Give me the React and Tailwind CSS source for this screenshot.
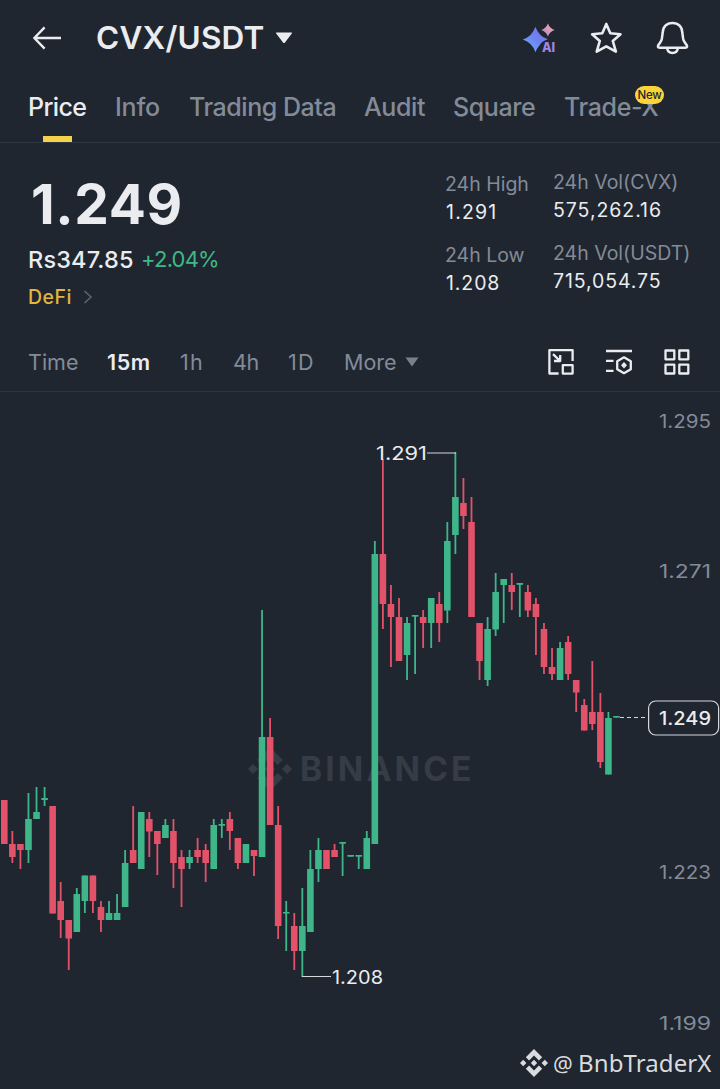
const TABS = [
  { label: 'Price', box: 'w-[87px] tracking-[-0.6px]', active: true },
  { label: 'Info', box: 'w-[74px] tracking-[-0.2px]' },
  { label: 'Trading Data', box: 'w-[175px] tracking-[-0.45px]' },
  { label: 'Audit', box: 'w-[89px] tracking-[-0.4px]' },
  { label: 'Square', box: 'w-[111px] tracking-[-0.4px]' },
  { label: 'Trade-X', box: 'w-[94px] tracking-[-0.35px]', badge: 'New' },
];

const FRAMES = [
  { label: 'Time', box: 'w-[79px] tracking-[0px]' },
  { label: '15m', box: 'w-[73px] tracking-[0.6px] font-semibold text-[#eaecef]' },
  { label: '1h', box: 'w-[53px] tracking-[1.2px]' },
  { label: '4h', box: 'w-[55px] tracking-[-0.4px]' },
  { label: '1D', box: 'w-[56px] tracking-[1.2px]' },
];

// [direction, high, body top, body bottom, low] in chart pixels
const CANDLES = [
  ['r', 800, 800, 844, 844], ['r', 831, 844, 857, 863], ['r', 844, 844, 850, 869], ['g', 793, 819, 850, 863],
  ['g', 787, 812, 819, 819], ['g', 787, 798, 800, 806], ['r', 806, 806, 913.5, 913.5], ['r', 882, 901, 920, 938],
  ['r', 920, 920, 938.5, 970], ['g', 888, 894, 932, 932], ['g', 875.5, 875.5, 901, 913], ['r', 875.5, 875.5, 901, 913],
  ['r', 901, 907, 920, 932], ['g', 901, 913, 920, 920], ['g', 894, 913, 920, 920], ['g', 850, 863, 907, 907],
  ['r', 806, 850, 863, 863], ['g', 812, 812, 869, 869], ['r', 812, 819, 831.5, 857], ['r', 831, 831, 844, 875],
  ['g', 819, 825, 838, 838], ['r', 819, 831, 863, 888], ['r', 850, 857, 869, 907], ['g', 850, 857, 863, 869],
  ['r', 838, 850, 857, 863], ['r', 844, 850, 863, 882], ['g', 819, 825, 869, 869], ['g', 819, 824, 825.7, 838],
  ['r', 812, 819, 831, 850], ['r', 838, 838, 863, 869], ['g', 844, 844, 863, 863], ['r', 850, 850, 856, 876],
  ['g', 610, 737, 857, 857], ['r', 718, 737, 825, 825], ['r', 806, 825, 926, 939], ['g', 901, 912, 913.5, 951],
  ['r', 913, 926, 951, 970], ['g', 888, 926, 951, 977], ['g', 850, 869, 932, 932], ['g', 838, 850, 869, 882],
  ['r', 850, 850, 869, 869], ['r', 844, 850, 857, 857], ['g', 842, 842, 843.7, 876], ['g', 855, 855, 856.7, 856.7],
  ['g', 855, 855, 856.7, 869], ['g', 831, 838, 869, 869], ['g', 541, 554, 844, 844], ['r', 459, 554, 604, 629],
  ['r', 585, 604, 617, 667], ['r', 598, 617, 661, 661], ['g', 617, 623, 655, 680], ['g', 615, 615, 616.7, 674],
  ['r', 610, 617, 623, 648], ['g', 598, 598, 623, 648], ['r', 592, 604, 623, 642], ['g', 522, 541, 610.5, 623],
  ['g', 452, 497, 535, 554], ['r', 478, 503, 516, 529], ['r', 497, 522, 617, 617], ['r', 623, 623, 661, 680],
  ['g', 617, 629, 680, 686], ['g', 573, 592, 629.5, 636], ['g', 579, 579, 585, 623], ['r', 573, 585, 592, 610],
  ['g', 583, 583, 584.8, 617], ['r', 585, 592, 610.5, 617], ['r', 598, 604, 617, 655], ['r', 623, 629, 667, 674],
  ['r', 648, 667, 674, 680], ['g', 642, 648, 680, 680], ['r', 636, 642, 674, 680], ['r', 680, 680, 692.5, 712],
  ['r', 699, 705, 730.5, 730.5], ['r', 661, 712, 724, 730], ['r', 693, 712, 762, 768], ['g', 712, 718, 774.5, 774.5],
  ['g', 716, 716, 717.6, 717.6],
];

const AXIS = [
  { label: '1.295', y: 422 },
  { label: '1.271', y: 572 },
  { label: '1.223', y: 873 },
  { label: '1.199', y: 1023.5 },
];

function BinanceMark({ className }) {
  return (
    <svg viewBox="0 0 28 28" className={className} fill="currentColor">
      <path d="M14 0 22.2 8.2 18.9 11.5 14 6.6 9.1 11.5 5.8 8.2Z" />
      <path d="M14 28 22.2 19.8 18.9 16.5 14 21.4 9.1 16.5 5.8 19.8Z" />
      <path d="M14 10.8 17.2 14 14 17.2 10.8 14Z" />
      <path d="M3.2 10.8 6.4 14 3.2 17.2 0 14Z" />
      <path d="M24.8 10.8 28 14 24.8 17.2 21.6 14Z" />
    </svg>
  );
}

function Header() {
  return (
    <header className="flex h-[76px] items-center text-[#eaecef]">
      <svg viewBox="0 0 30 24" className="ml-8 h-6 w-[30px]" fill="none" stroke="currentColor" strokeWidth="2.4">
        <path d="M29 12H2.6M12.6 1.4 2.4 12 12.6 22.6" />
      </svg>
      <h1 className="ml-[34px] w-[168px] whitespace-nowrap text-[31.5px] font-semibold tracking-[0.2px]">CVX/USDT</h1>
      <svg viewBox="0 0 18 12" className="ml-[11px] h-3 w-[18px]" fill="currentColor">
        <path d="M1.6.6H16.4Q17.6.6 16.8 1.6L10 10.4Q9 11.6 8 10.4L1.2 1.6Q.4.6 1.6.6Z" />
      </svg>
      <svg viewBox="0 0 34 32" className="ml-[229px] h-8 w-[34px]">
        <defs>
          <linearGradient id="spark" x1="0" y1="1" x2="1" y2="0">
            <stop offset="0" stopColor="#6fb4fa" />
            <stop offset="0.5" stopColor="#6a85f2" />
            <stop offset="1" stopColor="#8a67e8" />
          </linearGradient>
          <linearGradient id="small" x1="0" y1="1" x2="1" y2="0">
            <stop offset="0" stopColor="#b57fd6" />
            <stop offset="1" stopColor="#f5b3a2" />
          </linearGradient>
        </defs>
        <path d="M13.4 4.8Q16.6 14.2 25.8 17.3 22 18.6 19.6 20.6L16.5 24.8Q14.6 27 13.4 30.2 10.2 20.6 .8 17.6 10.2 14.4 13.4 4.8Z" fill="url(#spark)" />
        <path d="M25.9 1.4Q27.6 6.3 32.6 8 27.6 9.7 25.9 14.6 24.2 9.7 19.2 8 24.2 6.3 25.9 1.4Z" fill="url(#small)" />
        <text x="20" y="30" textLength="13.2" lengthAdjust="spacingAndGlyphs" fontSize="12.5" fontWeight="800" fontFamily="Inter, sans-serif" fill="#9f86e4">AI</text>
      </svg>
      <svg viewBox="0 0 34 34" className="ml-[33px] h-[34px] w-[34px]" fill="none" stroke="currentColor" strokeWidth="2.6" strokeLinejoin="round">
        <path d="M17.3 2.9 21.3 12.2 31.5 13.3 23.8 20 26.9 30.6 17.3 25.4 7.7 30.6 10.8 20 3.1 13.3 13.3 12.2Z" />
      </svg>
      <svg viewBox="0 0 34 34" className="ml-[32px] h-[34px] w-[34px]" fill="none" stroke="currentColor" strokeWidth="2.5" strokeLinejoin="round">
        <path d="M17.5 1.9C11.6 1.9 7.7 6.1 7.7 11.8L6.8 18Q6.4 20 5.2 21.4L3.4 23.9Q2 26.8 4.6 26.8H30.4Q33 26.8 31.6 23.9L29.8 21.4Q28.6 20 28.2 18L27.3 11.8C27.3 6.1 23.4 1.9 17.5 1.9Z" />
        <path d="M12.2 27.4C13 33.4 22 33.4 22.8 27.4" />
      </svg>
    </header>
  );
}

function Tabs() {
  return (
    <nav className="flex h-[67px] border-b border-[#303742] pl-7 text-[25px] font-medium text-[#848b98]">
      {TABS.map((tab) => (
        <div key={tab.label} className={`relative shrink-0 whitespace-nowrap leading-[62px] ${tab.box} ${tab.active ? 'text-[#eaecef]' : ''}`}>
          {tab.label}
          {tab.active && <span className="absolute left-[15px] top-[60px] h-[6px] w-[29px] bg-[#f3d14b]" />}
          {tab.badge && (
            <span className="absolute left-[71px] top-[10px] h-[18px] w-[29px] rounded-full bg-[#fbd535] text-center text-[11.5px] leading-[18px] tracking-[-0.3px] text-[#202630]">
              {tab.badge}
            </span>
          )}
        </div>
      ))}
    </nav>
  );
}

function Stat({ label, value, tone }) {
  return (
    <div className="whitespace-nowrap text-[19.5px] leading-7">
      <div className="text-[#848b98]">{label}</div>
      <div className={`text-[#eaecef] ${tone}`}>{value}</div>
    </div>
  );
}

function Summary() {
  return (
    <section className="flex h-[190px]">
      <div className="w-[417px] pl-7 pt-[31px] whitespace-nowrap">
        <div className="pl-[3px] text-[55px] font-bold leading-[60px] tracking-[0.6px] text-[#eaecef]">1.249</div>
        <div className="mt-[11px] flex h-[30px] leading-[30px]">
          <span className="w-[113px] text-[23.5px] font-medium tracking-[0.15px] text-[#eaecef]">Rs347.85</span>
          <span className="-mt-px text-[22px] tracking-[-0.8px] text-[#3fb889]">+2.04%</span>
        </div>
        <div className="mt-[9px] flex items-center">
          <span className="w-[55px] text-[19.5px] font-medium leading-[26px] tracking-[0.5px] text-[#e2b53c]">DeFi</span>
          <svg viewBox="0 0 10 14" className="h-[14px] w-[10px]" fill="none" stroke="#5e6673" strokeWidth="1.5">
            <path d="M1.5 1 8 7 1.5 13" />
          </svg>
        </div>
      </div>
      <div className="flex w-[136px] flex-col gap-[15px] pl-7 pt-[27px]">
        <Stat label="24h High" value="1.291" tone="pl-px tracking-[1.2px]" />
        <Stat label="24h Low" value="1.208" tone="pl-px tracking-[0.9px]" />
      </div>
      <div className="flex flex-col gap-[15px] pt-[25px]">
        <Stat label="24h Vol(CVX)" value="575,262.16" tone="tracking-[0.95px]" />
        <Stat label="24h Vol(USDT)" value="715,054.75" tone="tracking-[0.9px]" />
      </div>
    </section>
  );
}

function Timeframes() {
  return (
    <section className="flex h-[59px] items-center border-b border-[#2d343f] pl-7 text-[21.5px] text-[#848b98]">
      {FRAMES.map((frame) => (
        <span key={frame.label} className={`shrink-0 whitespace-nowrap ${frame.box}`}>{frame.label}</span>
      ))}
      <span className="w-[61px] whitespace-nowrap">More</span>
      <svg viewBox="0 0 14 10" className="h-[10px] w-[14px]" fill="#77808c">
        <path d="M.5.5H13.5L7 9.5Z" />
      </svg>
      <svg viewBox="0 0 28 28" className="ml-[128px] h-7 w-7" fill="none" stroke="#eaecef" strokeWidth="2.3" strokeLinejoin="round">
        <path d="M11.6 25.5H2.4V2.2H25.6V13M15.8 17.2H25.6V25.6H15.8ZM6 6.2 13 12.8M13.2 7V13H7" />
      </svg>
      <svg viewBox="0 0 28 28" className="ml-[30px] h-7 w-7" fill="none" stroke="#eaecef" strokeWidth="2.3">
        <path d="M1 3H27M1 12.8H8.5M1 22.8H8.5" />
        <path d="M19 9.3 25.8 13.2V21.2L19 25.2 12.2 21.2V13.2Z" strokeLinejoin="round" />
        <path d="M19 14 22 17.2 19 20.4 16 17.2Z" fill="#eaecef" stroke="none" />
      </svg>
      <svg viewBox="0 0 28 28" className="ml-[30px] h-7 w-7" fill="none" stroke="#eaecef" strokeWidth="2.3" strokeLinejoin="round">
        <path d="M2.5 2.5H11.3V11.3H2.5ZM16.3 2.5H25.3V11.3H16.3ZM2.5 16.7H11.3V25.5H2.5ZM16.3 16.7H25.3V25.5H16.3Z" />
      </svg>
    </section>
  );
}

function Chart() {
  return (
    <section className="relative h-[697px]">
      <div className="absolute left-[248px] top-[355px] flex items-center text-[#363c46]">
        <BinanceMark className="h-11 w-11" />
        <span className="ml-[8px] text-[33.5px] font-bold leading-[44px] tracking-[3.1px]">BINANCE</span>
      </div>
      <svg viewBox="0 392 720 697" className="relative block h-[697px] w-[720px]" fontFamily="Inter, sans-serif" fontSize="18.3">
        {CANDLES.map(([dir, high, top, bottom, low], i) => {
          const x = 4.3 + i * 8.055;
          return (
            <g key={i} fill={dir === 'g' ? '#3fb68a' : '#e2536a'}>
              <rect x={x - 0.9} y={high} width="1.8" height={low - high} />
              <rect x={x - 3.3} y={top} width="6.6" height={bottom - top} />
            </g>
          );
        })}
        <g fill="none" stroke="#d5d8dd" strokeWidth="1.2">
          <path d="M427 453H456M302 976.5H331" />
          <path d="M620 717.5H648" strokeDasharray="4 3" />
          <rect x="648.6" y="701" width="70" height="34" rx="7" fill="#1f2630" />
        </g>
        <g fill="#eaecef">
          <text x="376" y="460" textLength="51" lengthAdjust="spacingAndGlyphs">1.291</text>
          <text x="332" y="984" textLength="51" lengthAdjust="spacingAndGlyphs">1.208</text>
          <text x="659" y="725" textLength="52" lengthAdjust="spacingAndGlyphs" fontWeight="500">1.249</text>
        </g>
        <g fill="#848b98">
          {AXIS.map(({ label, y }) => (
            <text key={label} x="659" y={y + 6.3} textLength="52" lengthAdjust="spacingAndGlyphs">{label}</text>
          ))}
        </g>
      </svg>
      <div className="absolute left-[520px] top-[657px] flex items-center whitespace-nowrap text-[#d9dbde]">
        <BinanceMark className="h-7 w-7" />
        <span className="ml-[5px] w-[25px] font-['Noto_Sans',sans-serif] text-[22px] leading-7">@</span>
        <span className="font-['Noto_Sans',sans-serif] text-[24px] leading-7 tracking-[0.1px]">BnbTraderX</span>
      </div>
    </section>
  );
}

export default function App() {
  return (
    <main className="h-[1089px] w-[720px] overflow-hidden bg-[#1f2630] font-['Inter',sans-serif]">
      <Header />
      <Tabs />
      <Summary />
      <Timeframes />
      <Chart />
    </main>
  );
}
